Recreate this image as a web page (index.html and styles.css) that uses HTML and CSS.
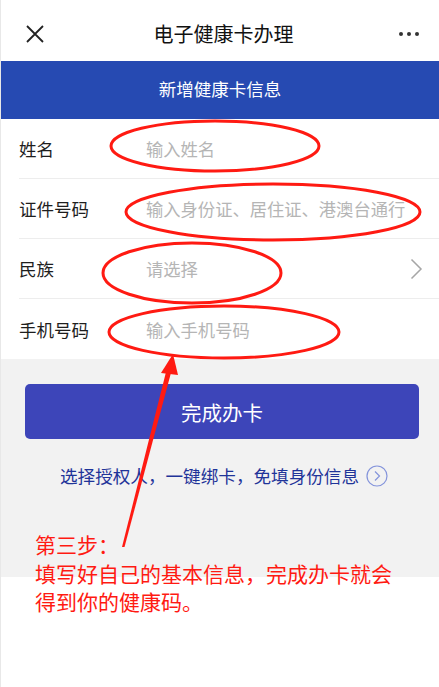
FILE: index.html
```html
<!DOCTYPE html>
<html lang="zh">
<head>
<meta charset="utf-8">
<title>电子健康卡办理</title>
<link rel="stylesheet" href="styles.css">
</head>
<body>
<div class="page">
  <header class="nav">
    <svg class="nav-close" width="18" height="18" viewBox="0 0 18 18"><path d="M1 1L17 17M17 1L1 17" stroke="#222" stroke-width="1.8" fill="none"/></svg>
    <div class="nav-title">电子健康卡办理</div>
    <div class="nav-more"><span></span><span></span><span></span></div>
  </header>
  <div class="banner">新增健康卡信息</div>
  <section class="form">
    <div class="row"><div class="label">姓名</div><div class="ph">输入姓名</div></div>
    <div class="row"><div class="label">证件号码</div><div class="ph">输入身份证、居住证、港澳台通行</div></div>
    <div class="row"><div class="label">民族</div><div class="ph">请选择</div>
      <svg class="chev" width="13" height="22" viewBox="0 0 13 22"><path d="M1.5 1.5L11 11L1.5 20.5" stroke="#a6a6a6" stroke-width="1.5" fill="none"/></svg>
    </div>
    <div class="row"><div class="label">手机号码</div><div class="ph">输入手机号码</div></div>
  </section>
  <section class="actions">
    <div class="btn">完成办卡</div>
    <div class="link">选择授权人，一键绑卡，免填身份信息
      <svg class="link-icon" width="22" height="22" viewBox="0 0 22 22"><circle cx="11" cy="11" r="10" stroke="#8494db" stroke-width="1.2" fill="none"/><path d="M9 6.5L13.5 11L9 15.5" stroke="#8494db" stroke-width="1.2" fill="none"/></svg>
    </div>
  </section>
  <div class="rest"></div>

  <svg class="marks" width="439" height="687" viewBox="0 0 439 687">
    <g stroke="#ff1a12" stroke-width="3" fill="none">
      <ellipse cx="215" cy="146" rx="104" ry="25"/>
      <ellipse cx="273" cy="212" rx="147" ry="28"/>
      <ellipse cx="192" cy="273" rx="89" ry="30"/>
      <ellipse cx="224" cy="332" rx="115" ry="26"/>
    </g>
    <polygon points="122,547 124.5,547 172,369 167,368" fill="#ff1a12"/>
    <polygon points="173,354 161,373 178,375" fill="#ff1a12"/>
  </svg>
  <div class="note">第三步：<br>填写好自己的基本信息，完成办卡就会<br>得到你的健康码。</div>
</div>
</body>
</html>
```

FILE: styles.css
```css
html, body {
  margin: 0;
  padding: 0;
  background: #fff;
}
body {
  font-family: "Noto Sans CJK SC", "Noto Sans", sans-serif;
}
.page {
  position: relative;
  width: 438px;
  height: 687px;
  border-left: 1px solid #e8e8e8;
  overflow: hidden;
  display: flex;
  flex-direction: column;
}
.nav {
  height: 55px;
  padding-top: 6px;
  display: flex;
  align-items: center;
  justify-content: space-between;
  padding-left: 25px;
  padding-right: 20px;
  background: #fff;
}
.nav-close {
  width: 18px;
  height: 18px;
}
.nav-title {
  font-size: 20px;
  color: #111;
  line-height: 24px;
  margin-left: 4px;
}
.nav-more {
  display: flex;
  gap: 4px;
  padding-top: 1px;
}
.nav-more span {
  width: 4px;
  height: 4px;
  border-radius: 50%;
  background: #333;
}
.banner {
  height: 58px;
  background: #264ab2;
  color: #fff;
  font-size: 17.5px;
  display: flex;
  align-items: center;
  justify-content: center;
  padding-bottom: 3px;
  box-sizing: border-box;
}
.form {
  background: #fff;
  padding-left: 18px;
}
.row {
  height: 60px;
  display: flex;
  align-items: center;
  border-bottom: 1px solid #ededed;
  box-sizing: border-box;
  position: relative;
}
.row:last-child {
  border-bottom: none;
}
.label {
  width: 127px;
  font-size: 17.5px;
  color: #1e1e1e;
}
.ph {
  font-size: 17.3px;
  color: #b5b5b5;
  white-space: nowrap;
  flex: 1;
  overflow: hidden;
}
.chev {
  margin-right: 16px;
}
.actions {
  background: #f2f2f2;
  height: 218px;
  padding: 25px 20px 0 24px;
  box-sizing: border-box;
}
.btn {
  height: 55px;
  background: #3d45b9;
  border-radius: 5px;
  color: #fff;
  font-size: 20.5px;
  display: flex;
  align-items: center;
  justify-content: center;
}
.link {
  margin-top: 25px;
  display: flex;
  align-items: center;
  justify-content: center;
  font-size: 17.6px;
  color: #1f3499;
  line-height: 24px;
  gap: 7px;
  padding-left: 4px;
}
.link-icon {
  flex: none;
}
.rest {
  flex: 1;
  background: #fff;
}
.marks {
  position: absolute;
  left: -1px;
  top: 0;
  pointer-events: none;
}
.note {
  position: absolute;
  left: 34px;
  top: 530px;
  font-size: 21px;
  line-height: 28.5px;
  color: #ff1a12;
  white-space: nowrap;
}
```
